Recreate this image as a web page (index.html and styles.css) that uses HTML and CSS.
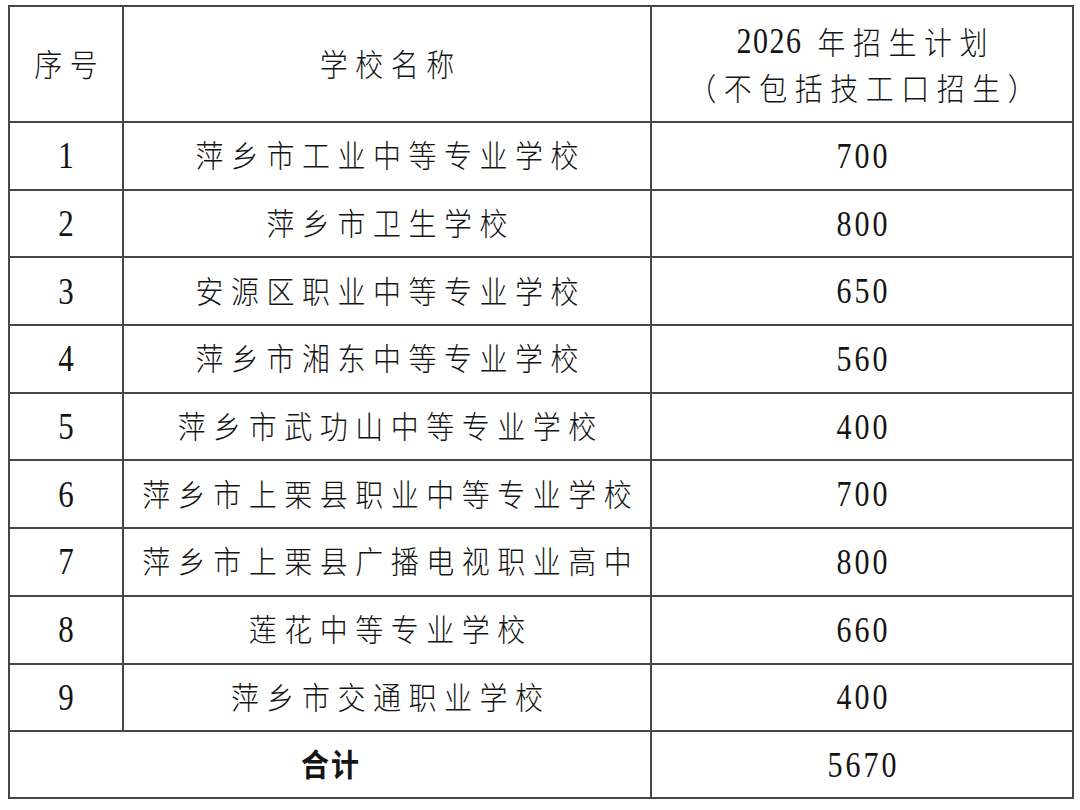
FILE: index.html
```html
<!DOCTYPE html>
<html lang="zh-CN">
<head>
<meta charset="utf-8">
<title>2026年招生计划</title>
<link rel="stylesheet" href="styles.css">
</head>
<body>
<table class="plan">
  <colgroup>
    <col class="c-no">
    <col class="c-name">
    <col class="c-num">
  </colgroup>
  <thead>
    <tr class="head">
      <th><span class="cjk">序号</span></th>
      <th><span class="cjk">学校名称</span></th>
      <th>
        <div class="h-line"><span class="num-s">2026</span><span class="cjk">年招生计划</span></div>
        <div class="h-line"><span class="cjk">（不包括技工口招生）</span></div>
      </th>
    </tr>
  </thead>
  <tbody>
    <tr><td><span class="idx">1</span></td><td><span class="cjk">萍乡市工业中等专业学校</span></td><td><span class="num">700</span></td></tr>
    <tr><td><span class="idx">2</span></td><td><span class="cjk">萍乡市卫生学校</span></td><td><span class="num">800</span></td></tr>
    <tr><td><span class="idx">3</span></td><td><span class="cjk">安源区职业中等专业学校</span></td><td><span class="num">650</span></td></tr>
    <tr><td><span class="idx">4</span></td><td><span class="cjk">萍乡市湘东中等专业学校</span></td><td><span class="num">560</span></td></tr>
    <tr><td><span class="idx">5</span></td><td><span class="cjk">萍乡市武功山中等专业学校</span></td><td><span class="num">400</span></td></tr>
    <tr><td><span class="idx">6</span></td><td><span class="cjk">萍乡市上栗县职业中等专业学校</span></td><td><span class="num">700</span></td></tr>
    <tr><td><span class="idx">7</span></td><td><span class="cjk">萍乡市上栗县广播电视职业高中</span></td><td><span class="num">800</span></td></tr>
    <tr><td><span class="idx">8</span></td><td><span class="cjk">莲花中等专业学校</span></td><td><span class="num">660</span></td></tr>
    <tr><td><span class="idx">9</span></td><td><span class="cjk">萍乡市交通职业学校</span></td><td><span class="num">400</span></td></tr>
  </tbody>
  <tfoot>
    <tr class="total">
      <td colspan="2"><span class="cjk bold">合计</span></td>
      <td><span class="num">5670</span></td>
    </tr>
  </tfoot>
</table>
</body>
</html>
```

FILE: styles.css
```css
html, body {
  margin: 0;
  padding: 0;
  background: #ffffff;
}

body {
  padding: 5px 0 0 8px;
  color: #141414;
  font-family: "Noto Sans CJK SC", "Liberation Serif", serif;
}

.plan {
  border-collapse: collapse;
  table-layout: fixed;
  width: 1064px;
}

.c-no { width: 114px; }
.c-name { width: 528px; }
.c-num { width: 422px; }

.plan th,
.plan td {
  border: 2px solid #474747;
  padding: 0;
  text-align: center;
  vertical-align: middle;
  font-weight: normal;
}

.head th { height: 114px; }
.plan tbody td { height: 65.7px; }
.total td { height: 65px; }

.cjk {
  display: inline-block;
  font-family: "Noto Sans CJK SC", sans-serif;
  font-weight: 300;
  font-size: 28px;
  letter-spacing: 7.5px;
  margin-right: -7.5px;
  line-height: 1;
  transform: scaleY(1.1);
}

.bold {
  font-weight: 700;
  letter-spacing: 2px;
  margin-right: -2px;
}

.h-line {
  line-height: 1;
  height: 46px;
  display: flex;
  align-items: center;
  justify-content: center;
}

.num,
.num-s,
.idx {
  display: inline-block;
  font-family: "Liberation Serif", serif;
  line-height: 1;
  transform: scaleY(1.2);
}

.num {
  font-size: 30px;
  letter-spacing: 3px;
  margin-right: -3px;
}

.num-s {
  font-size: 30px;
  letter-spacing: 1.5px;
  margin-right: 15px;
}

.idx {
  font-size: 31px;
}
```
